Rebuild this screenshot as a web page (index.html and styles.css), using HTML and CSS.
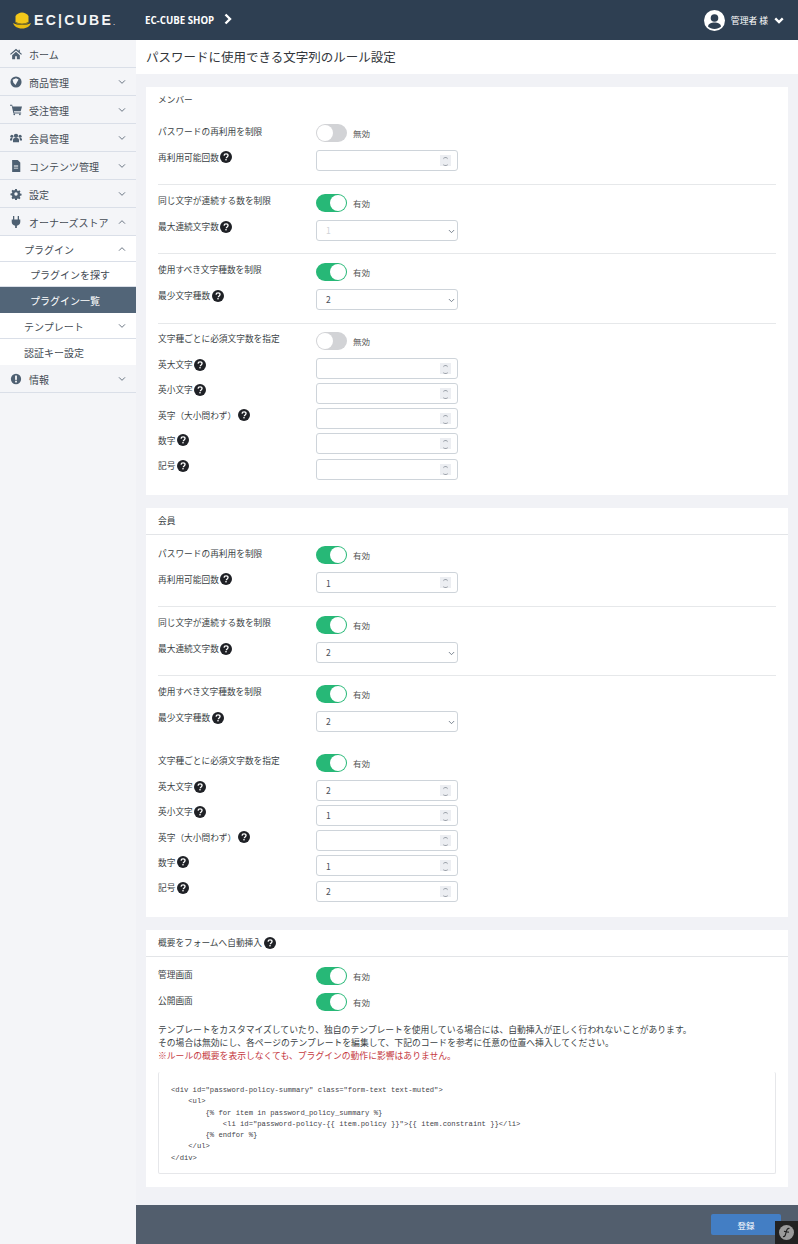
FILE: index.html
```html
<!DOCTYPE html>
<html lang="ja">
<head>
<meta charset="utf-8">
<title>パスワードに使用できる文字列のルール設定</title>
<link rel="stylesheet" href="styles.css">
</head>
<body>
<svg class="defs" width="0" height="0" aria-hidden="true">
  <symbol id="q" viewBox="0 0 16 16"><circle cx="8" cy="8" r="8" fill="#1f2126"/><path d="M5.400 6.200C5.500 4.700 6.600 3.900 8.100 3.900c1.500 0 2.600.9 2.600 2.200 0 1-.6 1.500-1.300 2-.6.4-.9.7-.9 1.400" fill="none" stroke="#fff" stroke-width="1.800"/><rect x="7.100" y="10.700" width="1.800" height="1.800" fill="#fff"/></symbol>
  <symbol id="down" viewBox="0 0 12 8"><path d="M1.500 1.500 6 6l4.500-4.500" fill="none" stroke="#5f6b79" stroke-width="1.400"/></symbol>
  <symbol id="up" viewBox="0 0 12 8"><path d="M1.500 6.500 6 2l4.500 4.500" fill="none" stroke="#5f6b79" stroke-width="1.400"/></symbol>
</svg>
<header class="top">
  <div class="brand">
    <svg class="hat" width="18" height="17" viewBox="0 0 18 17"><path d="M0 11c1 3 4 5.500 9 5.500s8-2.500 9-5.500c-2 1.200-5 2-9 2s-7-.8-9-2z" fill="#e9bc10"/><path d="M2.500 10V4C4 2 6.500.5 9 .5S14 2 15.500 4v6c-1.500 1.300-4 2-6.500 2s-5-.7-6.500-2z" fill="#f3c81a"/><path d="M2.500 9.500c1.500 1.200 4 2 6.500 2s5-.8 6.500-2V11c-1.500 1.300-4 2-6.500 2s-5-.7-6.500-2z" fill="#8c7a1e"/></svg>
    <span class="logo">EC|CUBE<small>.</small></span>
  </div>
  <span class="shop">EC-CUBE SHOP</span>
  <svg class="shop-arrow" width="8" height="12" viewBox="0 0 8 12"><path d="M1.500 1.500 6 6l-4.500 4.500" fill="none" stroke="#fff" stroke-width="2.400"/></svg>
  <div class="user">
    <svg width="21" height="21" viewBox="0 0 21 21"><circle cx="10.500" cy="10.500" r="10.500" fill="#fff"/><circle cx="10.500" cy="8" r="3.800" fill="#2e3f52"/><path d="M4 16.500c.5-3 3-4 6.500-4s6 1 6.500 4c-1.500 1.500-4 2.500-6.500 2.500S5.500 18 4 16.500z" fill="#2e3f52"/></svg>
    <span>管理者 様</span>
    <svg width="10" height="7" viewBox="0 0 12 8"><path d="M1.500 1.500 6 6l4.500-4.500" fill="none" stroke="#fff" stroke-width="2.800"/></svg>
  </div>
</header>
<div class="layout">
  <nav class="side">
    <a class="nav"><svg class="ni" viewBox="0 0 14 12"><path d="M7 0 0 6l1 1 6-5 6 5 1-1-2.500-2.100V1H10v1.600zM2.500 7.500V12H6V8.500h2V12h3.500V7.500L7 3.500z" fill="#4e6072"/></svg><span>ホーム</span></a>
    <a class="nav"><svg class="ni" viewBox="0 0 14 14"><circle cx="7" cy="7" r="6.500" fill="#4e6072"/><path d="M3 4.500 7 2.500l3 1.500-2 3.500-1.500 3L4 8z" fill="#f5f6f9"/></svg><span>商品管理</span><svg class="ch"><use href="#down"/></svg></a>
    <a class="nav"><svg class="ni" viewBox="0 0 14 12"><path d="M0 0h2.500l.5 2H14l-1.500 5.500H4.500L5 9h8v1H4L2 1H0z" fill="#4e6072"/><circle cx="5" cy="11" r="1" fill="#4e6072"/><circle cx="11.500" cy="11" r="1" fill="#4e6072"/></svg><span>受注管理</span><svg class="ch"><use href="#down"/></svg></a>
    <a class="nav"><svg class="ni" viewBox="0 0 14 12"><circle cx="7" cy="3.500" r="2.500" fill="#4e6072"/><circle cx="2.200" cy="4" r="1.800" fill="#4e6072"/><circle cx="11.800" cy="4" r="1.800" fill="#4e6072"/><path d="M3.500 11V8c0-1.500 1.500-2 3.500-2s3.500.5 3.500 2v3zM0 9V7.500C0 6.500 1 6 2.800 6L2.500 9zM14 9V7.500c0-1-1-1.500-2.800-1.500l.3 3z" fill="#4e6072"/></svg><span>会員管理</span><svg class="ch"><use href="#down"/></svg></a>
    <a class="nav"><svg class="ni" viewBox="0 0 14 14"><path d="M2.500 0H9l3 3v11H2.500z" fill="#4e6072"/><path d="M4.500 6.500h5v1h-5zM4.500 9h5v1h-5z" fill="#fff"/></svg><span>コンテンツ管理</span><svg class="ch"><use href="#down"/></svg></a>
    <a class="nav"><svg class="ni" viewBox="0 0 14 14"><path d="M5.800 0h2.400l.4 2 1.300.6 1.800-1 1.600 1.700-1.100 1.700.6 1.300 2 .5v2.400l-2 .4-.6 1.300 1.100 1.700-1.600 1.700-1.800-1-1.300.5-.4 2H5.800l-.4-2-1.300-.5-1.800 1L.7 12.100l1.100-1.700-.6-1.300-2-.4V6.300l2-.5.600-1.300L.7 2.800l1.600-1.700 1.800 1 1.300-.6z" fill="#4e6072" transform="translate(1.200 1.200) scale(.83)"/><circle cx="7" cy="7" r="2" fill="#f5f6f9"/></svg><span>設定</span><svg class="ch"><use href="#down"/></svg></a>
    <a class="nav"><svg class="ni" viewBox="0 0 14 14"><path d="M3.500 0h1.500v4H9V0h1.500v4H12v3c0 2.500-2 4-4 4.300V14H6v-2.700C4 11 2 9.500 2 7V4h1.500z" fill="#4e6072"/></svg><span>オーナーズストア</span><svg class="ch"><use href="#up"/></svg></a>
    <a class="nav sub"><span>プラグイン</span><svg class="ch"><use href="#up"/></svg></a>
    <a class="nav sub2"><span>プラグインを探す</span></a>
    <a class="nav sub2 on"><span>プラグイン一覧</span></a>
    <a class="nav sub"><span>テンプレート</span><svg class="ch"><use href="#down"/></svg></a>
    <a class="nav sub last"><span>認証キー設定</span></a>
    <a class="nav"><svg class="ni" viewBox="0 0 14 14"><circle cx="7" cy="7" r="6" fill="#4e6072"/><rect x="6" y="3" width="2" height="5" fill="#fff"/><rect x="6" y="9" width="2" height="2" fill="#fff"/></svg><span>情報</span><svg class="ch"><use href="#down"/></svg></a>
  </nav>
  <main class="main">
    <h1 class="title">パスワードに使用できる文字列のルール設定</h1>
    <div class="content">
      <section class="card c1">
        <h2>メンバー</h2>
        <div class="group g1">
          <div class="row"><label>パスワードの再利用を制限</label><div class="sw off"></div><em>無効</em></div>
          <div class="row"><label>再利用可能回数 <svg class="q"><use href="#q"/></svg></label><div class="num"><i></i></div></div>
        </div>
        <div class="group">
          <div class="row"><label>同じ文字が連続する数を制限</label><div class="sw"></div><em>有効</em></div>
          <div class="row"><label>最大連続文字数 <svg class="q"><use href="#q"/></svg></label><div class="sel dis">1<svg><use href="#down"/></svg></div></div>
        </div>
        <div class="group">
          <div class="row"><label>使用すべき文字種数を制限</label><div class="sw"></div><em>有効</em></div>
          <div class="row"><label>最少文字種数 <svg class="q"><use href="#q"/></svg></label><div class="sel">2<svg><use href="#down"/></svg></div></div>
        </div>
        <div class="group tight">
          <div class="row"><label>文字種ごとに必須文字数を指定</label><div class="sw off"></div><em>無効</em></div>
          <div class="row"><label>英大文字 <svg class="q"><use href="#q"/></svg></label><div class="num"><i></i></div></div>
          <div class="row"><label>英小文字 <svg class="q"><use href="#q"/></svg></label><div class="num"><i></i></div></div>
          <div class="row"><label>英字（大小問わず） <svg class="q"><use href="#q"/></svg></label><div class="num"><i></i></div></div>
          <div class="row"><label>数字 <svg class="q"><use href="#q"/></svg></label><div class="num"><i></i></div></div>
          <div class="row"><label>記号 <svg class="q"><use href="#q"/></svg></label><div class="num"><i></i></div></div>
        </div>
      </section>
      <section class="card c2">
        <h2 class="ruled">会員</h2>
        <div class="group g1">
          <div class="row"><label>パスワードの再利用を制限</label><div class="sw"></div><em>有効</em></div>
          <div class="row"><label>再利用可能回数 <svg class="q"><use href="#q"/></svg></label><div class="num">1<i></i></div></div>
        </div>
        <div class="group">
          <div class="row"><label>同じ文字が連続する数を制限</label><div class="sw"></div><em>有効</em></div>
          <div class="row"><label>最大連続文字数 <svg class="q"><use href="#q"/></svg></label><div class="sel">2<svg><use href="#down"/></svg></div></div>
        </div>
        <div class="group">
          <div class="row"><label>使用すべき文字種数を制限</label><div class="sw"></div><em>有効</em></div>
          <div class="row"><label>最少文字種数 <svg class="q"><use href="#q"/></svg></label><div class="sel">2<svg><use href="#down"/></svg></div></div>
        </div>
        <div class="group tight noline">
          <div class="row"><label>文字種ごとに必須文字数を指定</label><div class="sw"></div><em>有効</em></div>
          <div class="row"><label>英大文字 <svg class="q"><use href="#q"/></svg></label><div class="num">2<i></i></div></div>
          <div class="row"><label>英小文字 <svg class="q"><use href="#q"/></svg></label><div class="num">1<i></i></div></div>
          <div class="row"><label>英字（大小問わず） <svg class="q"><use href="#q"/></svg></label><div class="num"><i></i></div></div>
          <div class="row"><label>数字 <svg class="q"><use href="#q"/></svg></label><div class="num">1<i></i></div></div>
          <div class="row"><label>記号 <svg class="q"><use href="#q"/></svg></label><div class="num">2<i></i></div></div>
        </div>
      </section>
      <section class="card c3">
        <h2 class="ruled">概要をフォームへ自動挿入 <svg class="q"><use href="#q"/></svg></h2>
        <div class="group g1 plain">
          <div class="row"><label>管理画面</label><div class="sw"></div><em>有効</em></div>
          <div class="row"><label>公開画面</label><div class="sw"></div><em>有効</em></div>
        </div>
        <p class="note">テンプレートをカスタマイズしていたり、独自のテンプレートを使用している場合には、自動挿入が正しく行われないことがあります。<br>その場合は無効にし、各ページのテンプレートを編集して、下記のコードを参考に任意の位置へ挿入してください。<br><span class="red">※ルールの概要を表示しなくても、プラグインの動作に影響はありません。</span></p>
<pre class="code">&lt;div id="password-policy-summary" class="form-text text-muted"&gt;
    &lt;ul&gt;
        {% for item in password_policy_summary %}
            &lt;li id="password-policy-{{ item.policy }}"&gt;{{ item.constraint }}&lt;/li&gt;
        {% endfor %}
    &lt;/ul&gt;
&lt;/div&gt;</pre>
      </section>
    </div>
    <footer class="foot"><button class="save">登録</button></footer>
  </main>
</div>
<div class="sf"><svg width="15" height="15" viewBox="0 0 15 15"><circle cx="7.500" cy="7.500" r="7.500" fill="#9a9a9a"/><path d="M10.500 3.500C8.500 3 7.500 5 7 7.500 6.500 10 6 12 4 11.500M5 6.500c1.500-.5 3 1 5 .5" fill="none" stroke="#222" stroke-width="1.200"/></svg></div>
</body>
</html>
```
FILE: styles.css
```css
* { box-sizing: border-box; }
html, body { margin: 0; padding: 0; }
body { width: 798px; height: 1244px; overflow: hidden; font-family: "Noto Sans CJK JP", "Noto Sans", sans-serif; font-size: 10px; color: #3a3f45; background: #f1f2f6; position: relative; }
.defs { position: absolute; }
.top { height: 40px; background: #2e3f52; color: #fff; display: flex; align-items: center; }
.brand { width: 145px; padding-left: 13px; display: flex; align-items: center; gap: 3px; }
.logo { font-family: "Liberation Sans", sans-serif; font-weight: 700; font-size: 14px; letter-spacing: 2.300px; color: #f4f5f6; white-space: nowrap; }
.logo small { font-size: 6px; letter-spacing: 0; }
.shop { font-family: "Open Sans", sans-serif; font-weight: 700; font-size: 9.700px; white-space: nowrap; }
.shop-arrow { margin-left: 10px; margin-top: -2px; }
.user { margin-left: auto; padding-right: 14px; display: flex; align-items: center; gap: 6px; font-size: 8.800px; }
.layout { display: flex; height: 1204px; }
.side { width: 136px; flex: none; background: #f4f5f8; }
.nav { display: flex; align-items: center; height: 28px; padding: 1px 10px 0 10px; border-bottom: 1px solid #dadfe8; color: #444c55; font-size: 10px; }
.nav .ni { width: 12px; height: 12px; margin-right: 7px; flex: none; }
.nav .ch { width: 8px; height: 6px; margin-left: auto; }
.sub { background: #fff; padding-left: 24px; height: 26px; }
.sub2 { background: #fff; padding-left: 30px; height: 25px; }
.sub2.on { background: #526578; color: #fff; border-bottom: 0; height: 26px; }
.sub.last { height: 26px; border-bottom: 0; }
.main { flex: 1; min-width: 0; display: flex; flex-direction: column; }
.title { margin: 0; height: 34px; background: #fff; font-size: 12.500px; font-weight: 400; line-height: 34px; padding-left: 10px; color: #33373c; }
.content { flex: 1; padding: 13px 10px 0; display: flex; flex-direction: column; gap: 13px; }
.card { background: #fff; padding: 0 12px; }
.c1 { height: 408px; }
.c2 { height: 409px; }
.c3 { height: 257px; }
.card h2 { margin: 0 -12px; padding: 0 12px 1px; height: 26px; font-size: 8.700px; font-weight: 400; display: flex; align-items: center; gap: 1.500px; color: #3a3f45; }
.card h2.ruled { height: 27px; border-bottom: 1px solid #e3e5e8; }
.group { border-top: 1px solid #e6e8ea; padding-top: 8.700px; padding-bottom: 12.300px; }
.group:nth-of-type(3) { padding-bottom: 12.600px; }
.group.g1 { border-top: 0; padding-top: 11px; padding-bottom: 13.300px; }
.group.tight { padding-top: 8px; }
.group.tight .row + .row { margin-bottom: 4.250px; }
.group.noline { border-top-color: transparent; }
.group .row:first-child { height: 18px; margin-bottom: 8px; }
.group.plain { padding-top: 10px; padding-bottom: 0; }
.plain .row + .row { height: 18px; }
.row { display: flex; align-items: center; height: 21px; }
.row label { width: 158px; height: 14px; align-self: flex-start; flex: none; font-size: 8.700px; display: flex; align-items: center; gap: 1.500px; color: #3a3f45; white-space: nowrap; }
.q { width: 12px; height: 12px; flex: none; }
.row em { font-style: normal; font-size: 8.500px; margin-left: 6px; color: #555; }
.sw { width: 31px; height: 18px; border-radius: 9px; background: #27b877; position: relative; flex: none; }
.sw::after { content: ""; position: absolute; top: 1px; right: 1px; width: 16px; height: 16px; border-radius: 50%; background: #fff; }
.sw.off { background: #d2d3d6; }
.sw.off::after { right: auto; left: 1px; }
.num, .sel { width: 142px; height: 21px; border: 1px solid #ced4da; border-radius: 3px; background: #fff; display: flex; align-items: center; padding-left: 9px; font-size: 8.500px; color: #48505a; position: relative; flex: none; }
.num i { position: absolute; right: 6px; top: 4px; width: 11px; height: 11px; background: #eceef2; }
.num i::before { content: ""; position: absolute; left: 3px; top: 2px; width: 5px; height: 7px; border-top: 1px solid #9aa0a8; border-bottom: 1px solid #9aa0a8; border-radius: 3px; }
.sel svg { position: absolute; right: 2px; top: 8px; width: 7px; height: 5px; }
.sel.dis { color: #cfd3d8; }
.note { margin: 12px 0 0; font-size: 8.800px; line-height: 13px; color: #3a3f45; white-space: nowrap; }
.red { color: #c5393f; }
.code { margin: 10px 0 0; height: 102px; border: 1px solid #e6e7ea; border-top: 0; border-radius: 2px; padding: 13px 12px; font-family: "Liberation Mono", monospace; font-size: 7.200px; line-height: 11.300px; color: #3f4349; background: #fff; }
.foot { height: 39px; flex: none; background: #525e6d; display: flex; align-items: flex-start; justify-content: flex-end; padding: 9px 17px 0 0; }
.save { width: 70px; height: 21px; border: 0; border-radius: 2px; background: #437ec4; color: #fff; font-family: inherit; font-size: 8.500px; padding: 0; }
.sf { position: absolute; right: 0; bottom: 0; width: 23px; height: 23px; background: #222; display: flex; align-items: center; justify-content: center; }
```
